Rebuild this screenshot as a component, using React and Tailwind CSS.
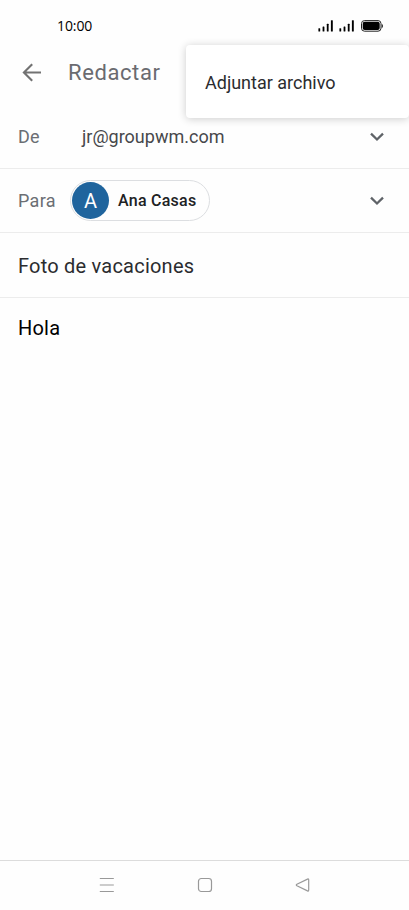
function SignalIcon() {
  return (
    <svg width="16" height="12" viewBox="0 0 16 12" fill="#000" aria-hidden="true">
      <rect x="0.4" y="8.3" width="1.8" height="3.2" rx="0.5" />
      <rect x="4.6" y="6.6" width="1.8" height="4.9" rx="0.5" />
      <rect x="8.8" y="3.8" width="1.8" height="7.7" rx="0.5" />
      <rect x="12.9" y="0.3" width="1.9" height="11.2" rx="0.5" />
    </svg>
  )
}

function BatteryIcon() {
  return (
    <svg width="24" height="12" viewBox="0 0 24 12" aria-hidden="true">
      <rect x="1.5" y="0.6" width="19.5" height="10.6" rx="3" fill="none" stroke="#222" strokeWidth="1" />
      <rect x="2.7" y="1.8" width="17" height="8.2" rx="2" fill="#000" />
      <path d="M21.8 4v4c.7-.3 1-1 1-2s-.3-1.7-1-2z" fill="#000" />
    </svg>
  )
}

function StatusBar() {
  return (
    <div className="flex h-[45px] items-center justify-between pr-[25px] pl-[57px]">
      <span className="pt-[5px] font-['Open_Sans',sans-serif] text-[14px] tracking-[-0.1px] text-black">10:00</span>
      <div className="flex items-center gap-[5px] pt-[7px]">
        <SignalIcon />
        <SignalIcon />
        <BatteryIcon />
      </div>
    </div>
  )
}

function ExpandIcon() {
  return (
    <svg width="16" height="10" viewBox="0 0 16 10" fill="none" stroke="#5f6368" strokeWidth="2.3" aria-hidden="true">
      <path d="M2 1.6L8 7.5l6-5.9" />
    </svg>
  )
}

function Header() {
  return (
    <header className="relative flex h-[60px] items-center pb-[5px] pl-[22px]">
      <button type="button" aria-label="Atrás">
        <svg width="20" height="20" viewBox="0 0 20 20" fill="none" stroke="#727272" strokeWidth="2.1">
          <path d="M19 9.5H2M10.2 1.2L1.9 9.5l8.3 8.3" />
        </svg>
      </button>
      <h1 className="ml-[26px] pt-px text-[22px] leading-none font-normal tracking-[0.6px] text-[#6a6b70]">Redactar</h1>
      {/* Overflow menu, open over the toolbar */}
      <div className="absolute top-0 right-0 flex h-[73px] w-[223px] items-center rounded-[4px] bg-white pt-0.5 pl-[19px] shadow-[0_1px_8px_rgba(0,0,0,0.2)]">
        <span className="text-[18px] text-[#2b2c2f]">Adjuntar archivo</span>
      </div>
    </header>
  )
}

export default function App() {
  return (
    <div className="flex h-[910px] w-full flex-col overflow-hidden bg-[#fefefe] font-['Roboto',sans-serif]">
      <StatusBar />
      <Header />
      <div className="flex h-16 items-center border-b border-[#ececec] pr-6 pl-[18px]">
        <span className="w-16 text-[18px] tracking-[0.2px] text-[#6b6e73]">De</span>
        <span className="flex-1 text-[18px] text-[#47484b]">jr@groupwm.com</span>
        <ExpandIcon />
      </div>
      <div className="flex h-16 items-center border-b border-[#ececec] pr-6 pl-[18px]">
        <span className="w-[52px] text-[18px] tracking-[0.3px] text-[#6b6e73]">Para</span>
        <div className="flex h-[41px] w-[140px] items-center rounded-full border border-[#dcdee1] pl-px">
          <span className="flex size-[37px] items-center justify-center rounded-full bg-[#1f649d] text-[20px] text-white">A</span>
          <span className="ml-[9px] text-[16px] font-medium tracking-[0.25px] whitespace-nowrap text-[#202124]">Ana Casas</span>
        </div>
        <div className="ml-auto">
          <ExpandIcon />
        </div>
      </div>
      <div className="flex h-[65px] items-center border-b border-[#ececec] pt-0.5 pl-[18px] text-[20px] tracking-[0.22px] text-[#2b2c2f]">
        Foto de vacaciones
      </div>
      <main className="flex-1 pt-[15px] pl-[18px] text-[20px] leading-[30px] tracking-[0.22px] text-black">Hola</main>
      <nav className="flex h-[50px] items-center justify-center gap-[82px] border-t border-[#dcdcdc] pb-0.5">
        <svg width="16" height="16" viewBox="0 0 16 16" fill="none" stroke="#999" strokeWidth="1.2">
          <path d="M.8 1.5h14M.8 8h14M.8 14.500h14" />
        </svg>
        <svg width="16" height="16" viewBox="0 0 16 16" fill="none" stroke="#999" strokeWidth="1.2">
          <rect x="1.5" y="1.5" width="13" height="13" rx="2.8" />
        </svg>
        <svg width="16" height="16" viewBox="0 0 16 16" fill="none" stroke="#999" strokeWidth="1.2" strokeLinejoin="round">
          <path d="M12.500 2.100L1.900 7.300q-1.200.7 0 1.400L12.500 13.900q1.200.5 1.200-.8V2.900q0-1.300-1.200-.8z" />
        </svg>
      </nav>
    </div>
  )
}
